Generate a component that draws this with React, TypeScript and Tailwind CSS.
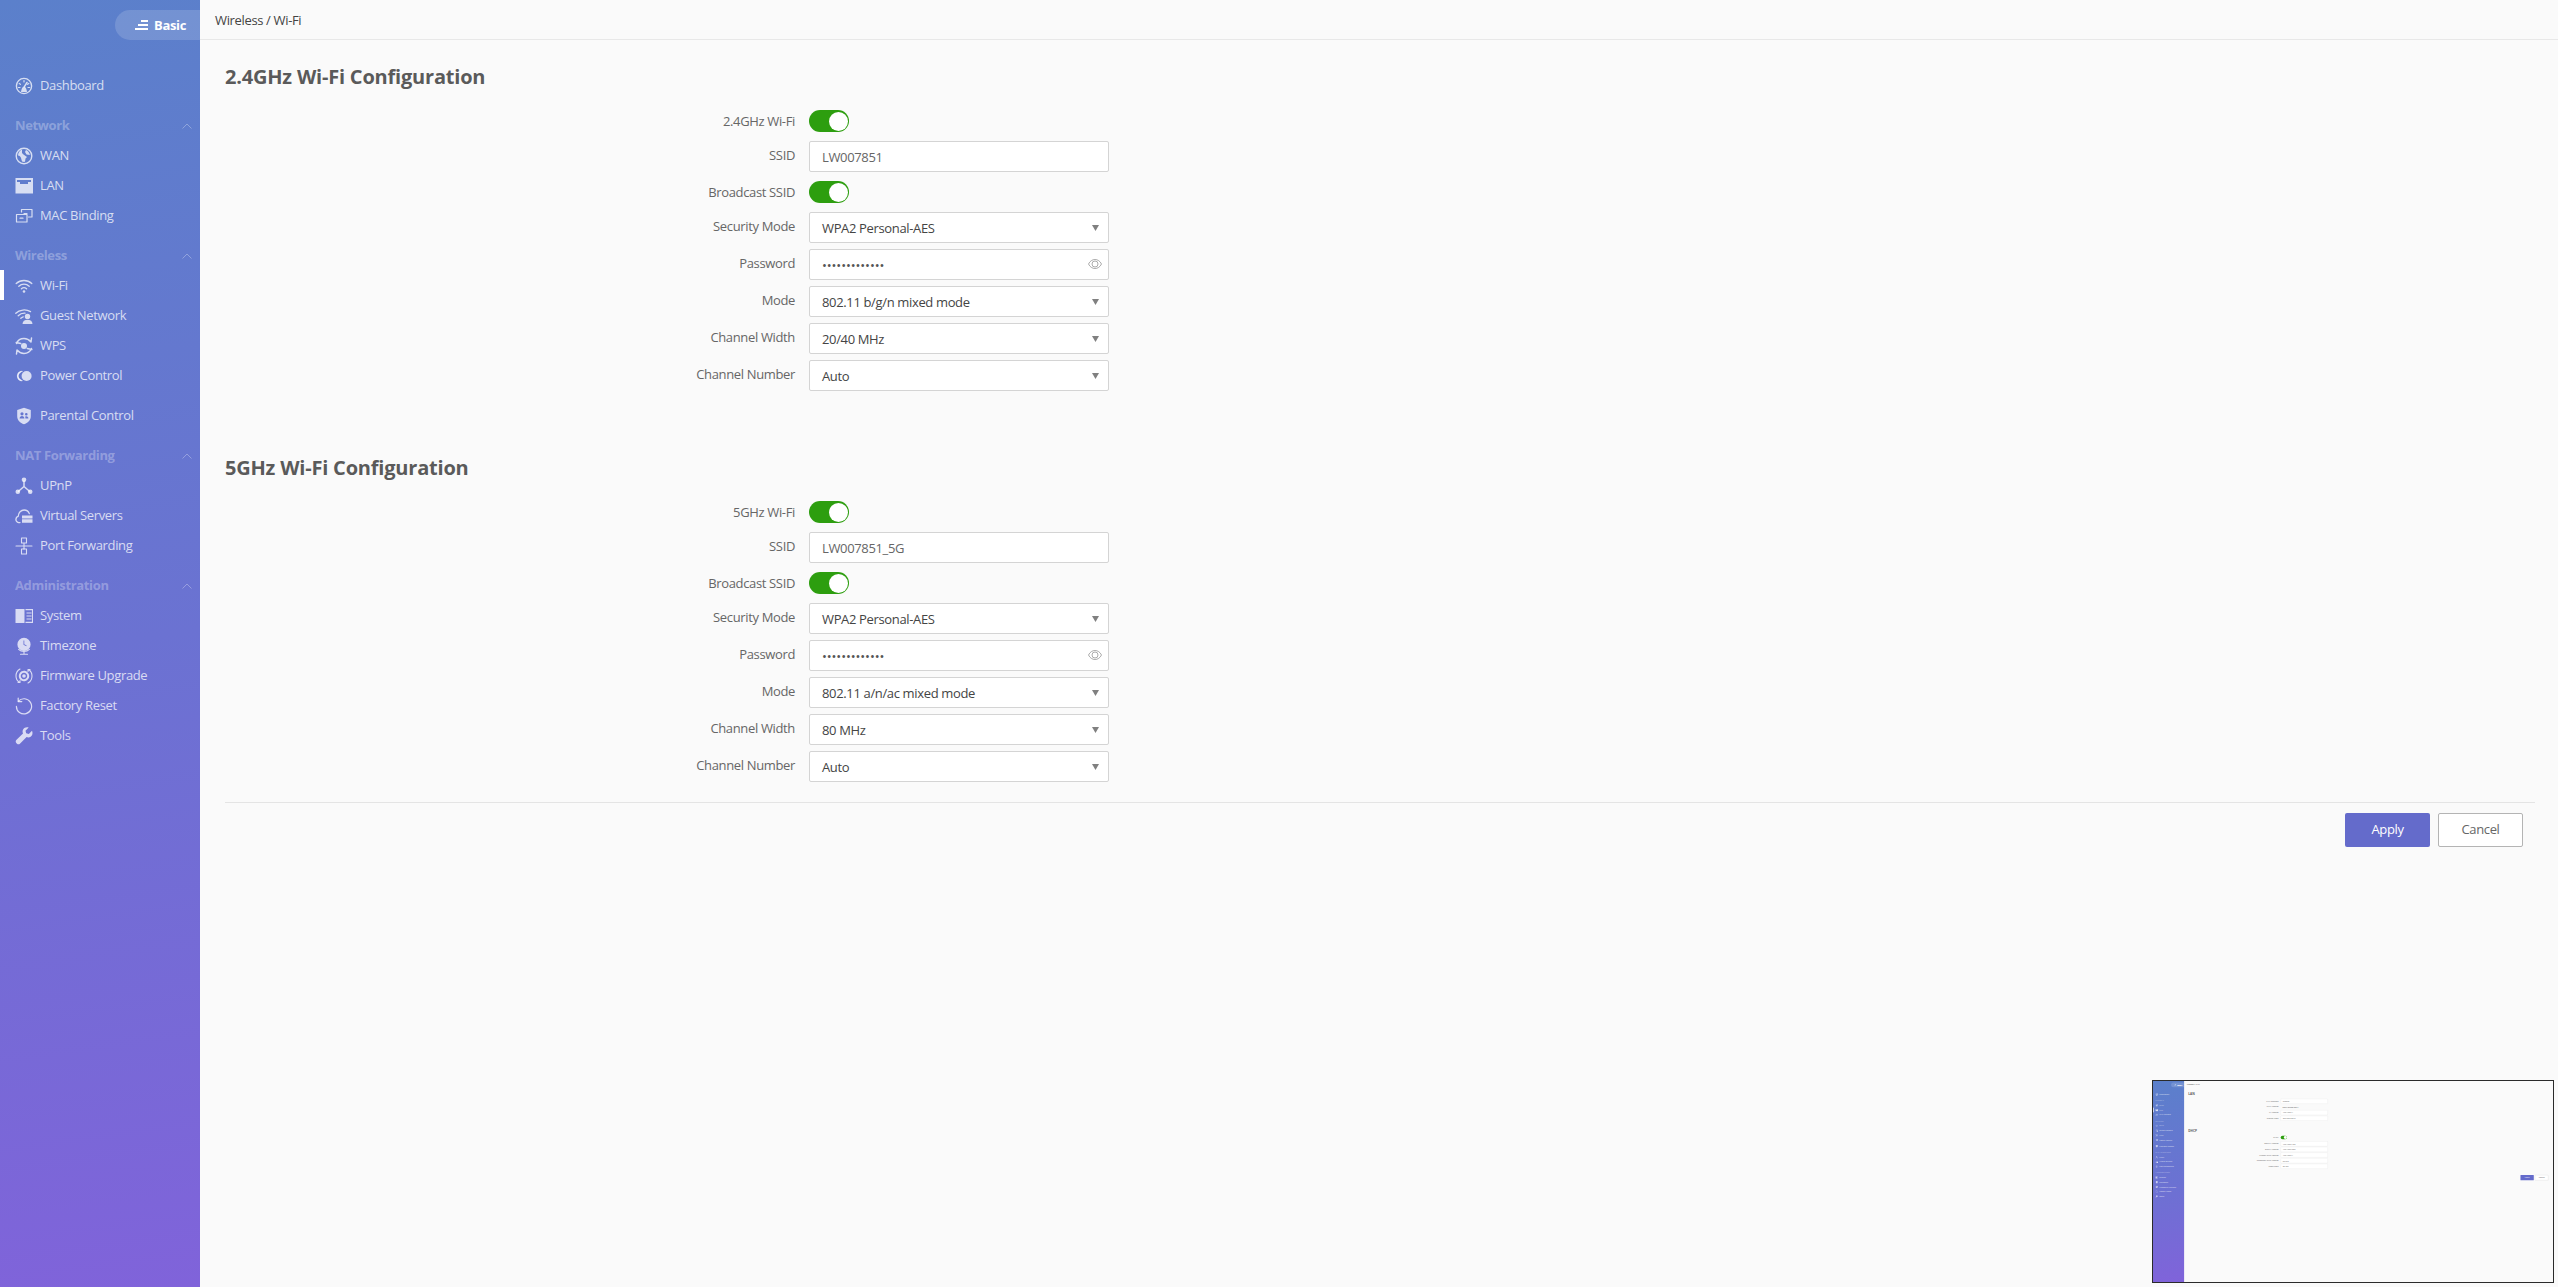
import React from "react";

type IconProps = { children: React.ReactNode };
const Svg = ({ children }: IconProps) => (
  <svg viewBox="0 0 18 18" className="w-[18px] h-[18px] shrink-0" fill="none" stroke="currentColor" strokeWidth="1.2" strokeLinecap="round" strokeLinejoin="round">
    {children}
  </svg>
);

const icons: Record<string, React.ReactNode> = {
  dashboard: (
    <Svg>
      <circle cx="9" cy="9" r="7.6" strokeWidth="1.4" />
      <path d="M9 3.5v1.5M4.2 6.500l1.200.8M13.800 6.500l-1.200.8M3.500 10.500H5M13 10.500h1.500" />
      <path d="M12 5.500 9.400 9.600" strokeWidth="1.5" />
      <path d="M6 15c.3-3 1.400-5.600 3-5.600s2.700 2.600 3 5.600z" fill="currentColor" stroke="none" />
    </Svg>
  ),
  wan: (
    <Svg>
      <circle cx="9" cy="9" r="7.8" strokeWidth="1.4" />
      <path d="M7 2.500C4.500 3.500 3 6 3 8.500c1.500 0 2.500 1 3 2.500l1 3.500c1 .5 2.500.5 3 .3l.5-3.300 1.500-1.500-3.500-2.500L7 6z" fill="currentColor" stroke="none" />
      <path d="M11 3c2 .8 3.600 2.800 3.900 5l-3.400-.5-1.500-2.500z" fill="currentColor" stroke="none" />
    </Svg>
  ),
  lan: (
    <Svg>
      <path fillRule="evenodd" d="M0.500 1h17.500v15.500H0.500zM2 3v2h3v2h8V5h3V3z" fill="currentColor" stroke="none" />
    </Svg>
  ),
  mac: (
    <Svg>
      <path d="M6.500 5V2.500H17v7.500h-3.500" />
      <path d="M1.500 7.500h10.500V15H1.500z" />
      <path d="M5 11.200h3M9 6.500h3" />
    </Svg>
  ),
  wifi: (
    <Svg>
      <path d="M1.200 6.500c4.400-4 11.200-4 15.600 0" strokeWidth="1.3" />
      <path d="M3.800 9.200c3-2.700 7.400-2.700 10.400 0" strokeWidth="1.3" />
      <path d="M6.400 11.800c1.500-1.300 3.700-1.300 5.200 0" strokeWidth="1.3" />
      <circle cx="9" cy="14.500" r="1.300" fill="currentColor" stroke="none" />
    </Svg>
  ),
  guest: (
    <Svg>
      <path d="M0.800 6.300C4.500 2.500 11 2 15.500 4.600" strokeWidth="1.3" />
      <path d="M3.200 8.800C5 7 7.500 6 10 6.200" strokeWidth="1.3" />
      <path d="M5.800 11.300c.7-.7 1.500-1.200 2.400-1.500" strokeWidth="1.3" />
      <circle cx="12.500" cy="9.400" r="2.700" fill="currentColor" stroke="none" />
      <path d="M7.500 17c0-2.800 2.200-4.300 5-4.300s5 1.500 5 4.300z" fill="currentColor" stroke="none" />
    </Svg>
  ),
  wps: (
    <Svg>
      <path d="M1.500 6.500C3 3 6 1.600 9 1.600s5 1 7 3.400L16.500 1M1.200 5.500l4.500 1" strokeWidth="1.5" />
      <path d="M16.500 11.500C15 15 12 16.400 9 16.400s-5-1-7-3.400L1.500 17M16.800 12.500l-4.500-1" strokeWidth="1.5" />
      <circle cx="9" cy="9" r="3" fill="currentColor" stroke="none" />
    </Svg>
  ),
  power: (
    <Svg>
      <path d="M7 4.400a4.600 4.600 0 1 0 0 9.200" strokeWidth="1.1" />
      <path d="M5.500 4.900A4.600 4.600 0 0 0 5.500 13" strokeWidth="1.1" />
      <circle cx="11.600" cy="9" r="5" fill="currentColor" stroke="none" />
    </Svg>
  ),
  parental: (
    <Svg>
      <path fillRule="evenodd" d="M9 .8 15.800 3v6.200c0 4-3 6.800-6.800 8-3.800-1.200-6.800-4-6.800-8V3zM7 5.200a1.600 1.600 0 1 0 0 3.200 1.600 1.600 0 0 0 0-3.200zM11.300 6a1.300 1.300 0 1 0 0 2.600 1.300 1.300 0 0 0 0-2.600zM4.600 11.600h4.800c0-1.600-1-2.600-2.400-2.600s-2.400 1-2.400 2.600zM10.400 11.600h3c0-1.400-.8-2.300-2-2.300-.5 0-.9.1-1.200.4.2.5.2 1.200.2 1.900z" fill="currentColor" stroke="none" />
    </Svg>
  ),
  upnp: (
    <Svg>
      <path d="M9 4v5.500M9 9.500l-5.500 4.700M9 9.500l5.500 4.700" strokeWidth="1.5" />
      <circle cx="9" cy="2.800" r="2.300" fill="currentColor" stroke="none" />
      <circle cx="2.800" cy="14.800" r="2.300" fill="currentColor" stroke="none" />
      <circle cx="15.200" cy="14.800" r="2.300" fill="currentColor" stroke="none" />
    </Svg>
  ),
  virtual: (
    <Svg>
      <path d="M5 15.600H3.600A2.900 2.900 0 0 1 1 12.200c0-1.500 1-2.600 2.200-2.900C3.400 5.600 6 3 9.100 3c2.400 0 4.400 1.400 5.200 3.600" strokeWidth="1.3" />
      <path fillRule="evenodd" d="M7 8.400h10.500v3H7zM7 12.200h10.500v3.600H7z" fill="currentColor" stroke="none" />
    </Svg>
  ),
  port: (
    <Svg>
      <path d="M6.500 1h5v5h-5zM9 6v6M1 9h16" strokeWidth="1.1" />
      <path d="M6.500 12h5v5h-5z" strokeWidth="1.1" />
    </Svg>
  ),
  system: (
    <Svg>
      <path d="M.5 2h9v14h-9z" fill="currentColor" stroke="none" />
      <path d="M10.500 2.600h7v12.800h-7M11.500 6h5M11.500 9h5M11.500 12h5" strokeWidth="1.1" strokeLinecap="butt" strokeLinejoin="miter" />
    </Svg>
  ),
  timezone: (
    <Svg>
      <path fillRule="evenodd" d="M9 .8a6.600 6.600 0 1 1 0 13.200A6.600 6.600 0 0 1 9 .8zM8.500 3.500v4.200l2.800 1.500.4-.7-2.400-1.300V3.500z" fill="currentColor" stroke="none" />
      <path d="M3.600 12.400c2.800 2.800 8 2.800 10.800 0M9 15v1.600M5.500 17.200h7" strokeWidth="1.1" />
    </Svg>
  ),
  firmware: (
    <Svg>
      <path d="M5 2C2.600 3.300 1 5.900 1 9c0 2.700 1.400 5.100 3.500 6.500M3 15.500h2v-2M13 16c2.400-1.300 4-3.900 4-7 0-2.700-1.400-5.100-3.500-6.500M15 2.500h-2v2" strokeWidth="1.1" />
      <circle cx="9" cy="9" r="4.200" strokeWidth="2" strokeDasharray="1.600 .6" />
      <circle cx="9" cy="9" r="1.800" fill="currentColor" stroke="none" />
    </Svg>
  ),
  reset: (
    <Svg>
      <path d="M3.400 4.200A7.600 7.600 0 1 1 1.400 9.400" strokeWidth="1.2" />
      <path d="M3.200 1v3.600h3.600" strokeWidth="1.2" />
    </Svg>
  ),
  tools: (
    <Svg>
      <path d="M17 3.800 13.800 7l-2.600-.7-.7-2.600L13.700.6C11.600-.2 9.200.6 8.100 2.400 7.400 3.700 7.400 5.200 8 6.400L1.300 13.100c-.8.8-.8 2.100 0 2.900l.7.7c.8.8 2.100.8 2.900 0l6.700-6.700c1.300.6 2.800.5 4-.2 1.700-1.100 2.500-3.500 1.400-6z" fill="currentColor" stroke="none" />
    </Svg>
  ),
};

type Item = { key: string; label: string };
type Group = { title?: string; items: Item[] };

const groups: Group[] = [
  { items: [{ key: "dashboard", label: "Dashboard" }] },
  {
    title: "Network",
    items: [
      { key: "wan", label: "WAN" },
      { key: "lan", label: "LAN" },
      { key: "mac", label: "MAC Binding" },
    ],
  },
  {
    title: "Wireless",
    items: [
      { key: "wifi", label: "Wi-Fi" },
      { key: "guest", label: "Guest Network" },
      { key: "wps", label: "WPS" },
      { key: "power", label: "Power Control" },
    ],
  },
  { items: [{ key: "parental", label: "Parental Control" }] },
  {
    title: "NAT Forwarding",
    items: [
      { key: "upnp", label: "UPnP" },
      { key: "virtual", label: "Virtual Servers" },
      { key: "port", label: "Port Forwarding" },
    ],
  },
  {
    title: "Administration",
    items: [
      { key: "system", label: "System" },
      { key: "timezone", label: "Timezone" },
      { key: "firmware", label: "Firmware Upgrade" },
      { key: "reset", label: "Factory Reset" },
      { key: "tools", label: "Tools" },
    ],
  },
];

function Sidebar({ active }: { active: string }) {
  return (
    <aside className="w-[200px] shrink-0 h-full bg-[linear-gradient(172deg,#5b80cb_0%,#6b72d2_50%,#8063da_100%)] flex flex-col">
      <div className="mt-[10px] ml-[115px] h-[30px] rounded-l-[15px] bg-white/15 flex items-center justify-end pr-[14px] gap-[6px] text-white">
        <svg viewBox="0 0 13 10" className="w-[13px] h-[10px]" fill="currentColor">
          <path d="M6 0h7v2H6zM3 4h10v2H3zM0 8h13v2H0z" />
        </svg>
        <span className="text-[13px] font-bold leading-none">Basic</span>
      </div>
      <nav className="mt-[30px] pt-[1px] flex flex-col gap-[10px]">
        {groups.map((g, i) => (
          <div key={i} className="flex flex-col">
            {g.title && (
              <div className="h-[30px] pl-[15px] pr-[8px] flex items-center justify-between text-[13px] font-bold text-white/30">
                <span>{g.title}</span>
                <svg viewBox="0 0 10 6" className="w-[10px] h-[6px]" fill="none" stroke="currentColor" strokeWidth="1">
                  <path d="M.5 5.500 5 1l4.500 4.500" />
                </svg>
              </div>
            )}
            {g.items.map((it) => (
              <div key={it.key} className="relative h-[30px] pl-[15px] flex items-center gap-[7px] text-[13px] text-white/75">
                {it.key === active && <span className="absolute left-0 top-[-1px] w-[4px] h-[30px] bg-white" />}
                {icons[it.key]}
                <span>{it.label}</span>
              </div>
            ))}
          </div>
        ))}
      </nav>
    </aside>
  );
}

function Toggle() {
  return (
    <div className="w-[40px] h-[22px] rounded-full bg-[#2d9e0f] flex items-center justify-end pr-[1.5px]">
      <div className="w-[19px] h-[19px] rounded-full bg-white" />
    </div>
  );
}

function Caret() {
  return (
    <svg viewBox="0 0 7 6" className="w-[7px] h-[6px] absolute right-[9px] top-[12px]" fill="#808080">
      <path d="M0 0h7L3.500 6z" />
    </svg>
  );
}

function Eye() {
  return (
    <svg viewBox="0 0 14 10" className="w-[14px] h-[10px] absolute right-[6px] top-[9px]" fill="none" stroke="#a3a3a3" strokeWidth=".9">
      <path d="M.5 5C2 2 4.300.5 7 .5S12 2 13.500 5C12 8 9.700 9.500 7 9.500S2 8 .5 5z" />
      <circle cx="7" cy="5" r="3" />
    </svg>
  );
}

type Row = { label: string; kind: "toggle" | "text" | "select" | "password" | "plain"; value?: string; h: string };

function FormRow({ row, labelW }: { row: Row; labelW: string }) {
  return (
    <div className={`flex items-start ${row.h}`}>
      <div className={`${labelW} shrink-0 pr-[14px] text-right text-[13px] text-[#666] ${row.kind === "toggle" ? "leading-[22px]" : "leading-[29px]"}`}>
        {row.label}
      </div>
      {row.kind === "toggle" ? (
        <Toggle />
      ) : row.kind === "plain" ? (
        <div className="w-[300px] h-[31px] pl-[12px] flex items-center text-[13px] text-[#555]">{row.value}</div>
      ) : (
        <div className="relative w-[300px] h-[31px] bg-white border border-[#d4d4d4] rounded-[2px] pl-[12px] flex items-center text-[13px] pt-[2px]">
          {row.kind === "password" ? (
            <span className="text-[#555] text-[13px] tracking-[-0.1px] leading-none">•••••••••••••</span>
          ) : (
            <span className={row.kind === "text" ? "text-[#666]" : "text-[#444]"}>{row.value}</span>
          )}
          {row.kind === "select" && <Caret />}
          {row.kind === "password" && <Eye />}
        </div>
      )}
    </div>
  );
}

const wifiRows = (name: string, ssid: string, mode: string, width: string): Row[] => [
  { label: name, kind: "toggle", h: "h-[31px]" },
  { label: "SSID", kind: "text", value: ssid, h: "h-[40px]" },
  { label: "Broadcast SSID", kind: "toggle", h: "h-[31px]" },
  { label: "Security Mode", kind: "select", value: "WPA2 Personal-AES", h: "h-[37px]" },
  { label: "Password", kind: "password", h: "h-[37px]" },
  { label: "Mode", kind: "select", value: mode, h: "h-[37px]" },
  { label: "Channel Width", kind: "select", value: width, h: "h-[37px]" },
  { label: "Channel Number", kind: "select", value: "Auto", h: "h-[31px]" },
];

function Section({ title, rows, labelW, className }: { title: string; rows: Row[]; labelW: string; className: string }) {
  return (
    <section className={className}>
      <h2 className="text-[20px] tracking-[-0.2px] leading-[26px] font-bold text-[#5a5a5a] mb-[20px]">{title}</h2>
      {rows.map((r) => (
        <FormRow key={r.label} row={r} labelW={labelW} />
      ))}
    </section>
  );
}

function Footer({ className }: { className: string }) {
  return (
    <div className={`border-t border-[#e4e4e4] flex justify-end gap-[8px] pt-[10px] pr-[12px] ${className}`}>
      <button className="w-[85px] h-[34px] rounded-[2px] bg-[#646bcb] text-white text-[13px]">Apply</button>
      <button className="w-[85px] h-[34px] rounded-[2px] bg-white border border-[#b4b4b4] text-[#666] text-[13px]">Cancel</button>
    </div>
  );
}

function Header({ text }: { text: string }) {
  return (
    <header className="h-[40px] border-b border-[#e8e8e8] pl-[15px] pt-[2px] flex items-center text-[13px] text-[#444]">{text}</header>
  );
}

function MainPage() {
  return (
    <div className="w-full h-full flex">
      <Sidebar active="wifi" />
      <main className="flex-1 min-w-0 h-full bg-[#fafafa]">
        <Header text="Wireless / Wi-Fi" />
        <div className="pl-[25px] pr-[23px]">
          <Section title="2.4GHz Wi-Fi Configuration" rows={wifiRows("2.4GHz Wi-Fi", "LW007851", "802.11 b/g/n mixed mode", "20/40 MHz")} labelW="w-[584px]" className="pt-[24px] pb-[40px]" />
          <Section title="5GHz Wi-Fi Configuration" rows={wifiRows("5GHz Wi-Fi", "LW007851_5G", "802.11 a/n/ac mixed mode", "80 MHz")} labelW="w-[584px]" className="pt-[24px] pb-[20px]" />
          <Footer className="" />
        </div>
      </main>
    </div>
  );
}

const miniLan: Row[] = [
  { label: "LAN Interface", kind: "text", value: "Default", h: "h-[36px]" },
  { label: "MAC Address", kind: "plain", value: "00:0A:EB:00:78:51", h: "h-[36px]" },
  { label: "IP Address", kind: "text", value: "192.168.0.1", h: "h-[36px]" },
  { label: "Subnet Mask", kind: "text", value: "255.255.255.0", h: "h-[31px]" },
];
const miniDhcp: Row[] = [
  { label: "DHCP", kind: "toggle", h: "h-[36px]" },
  { label: "Start IP Address", kind: "text", value: "192.168.0.100", h: "h-[36px]" },
  { label: "End IP Address", kind: "text", value: "192.168.0.200", h: "h-[36px]" },
  { label: "Primary DNS Address", kind: "text", value: "192.168.0.1", h: "h-[36px]" },
  { label: "Secondary DNS Address", kind: "text", value: "0.0.0.0", h: "h-[36px]" },
  { label: "Lease Time", kind: "text", value: "86400", h: "h-[31px]" },
];

function MiniPage() {
  return (
    <div className="w-[2558px] h-[1287px] flex origin-top-left scale-[0.1567]">
      <Sidebar active="lan" />
      <main className="flex-1 min-w-0 h-full bg-[#fafafa]">
        <header className="h-[40px] pl-[15px] flex items-center text-[13px] text-[#444]">Network / LAN</header>
        <div className="pl-[25px] pr-[23px]">
          <Section title="LAN" rows={miniLan} labelW="w-[590px]" className="pt-[28px] pb-[50px]" />
          <Section title="DHCP" rows={miniDhcp} labelW="w-[590px]" className="pt-[0px] pb-[30px]" />
          <Footer className="border-none" />
        </div>
      </main>
    </div>
  );
}

export default function App() {
  return (
    <div className="relative w-full h-[1287px] overflow-hidden bg-[#fafafa] font-['Open_Sans','Noto_Sans',sans-serif] tracking-[-0.35px]">
      <MainPage />
      <div className="absolute left-[2152px] top-[1080px] w-[402px] h-[203px] border border-[#2b2b2b] overflow-hidden bg-[#fafafa]">
        <MiniPage />
      </div>
    </div>
  );
}
